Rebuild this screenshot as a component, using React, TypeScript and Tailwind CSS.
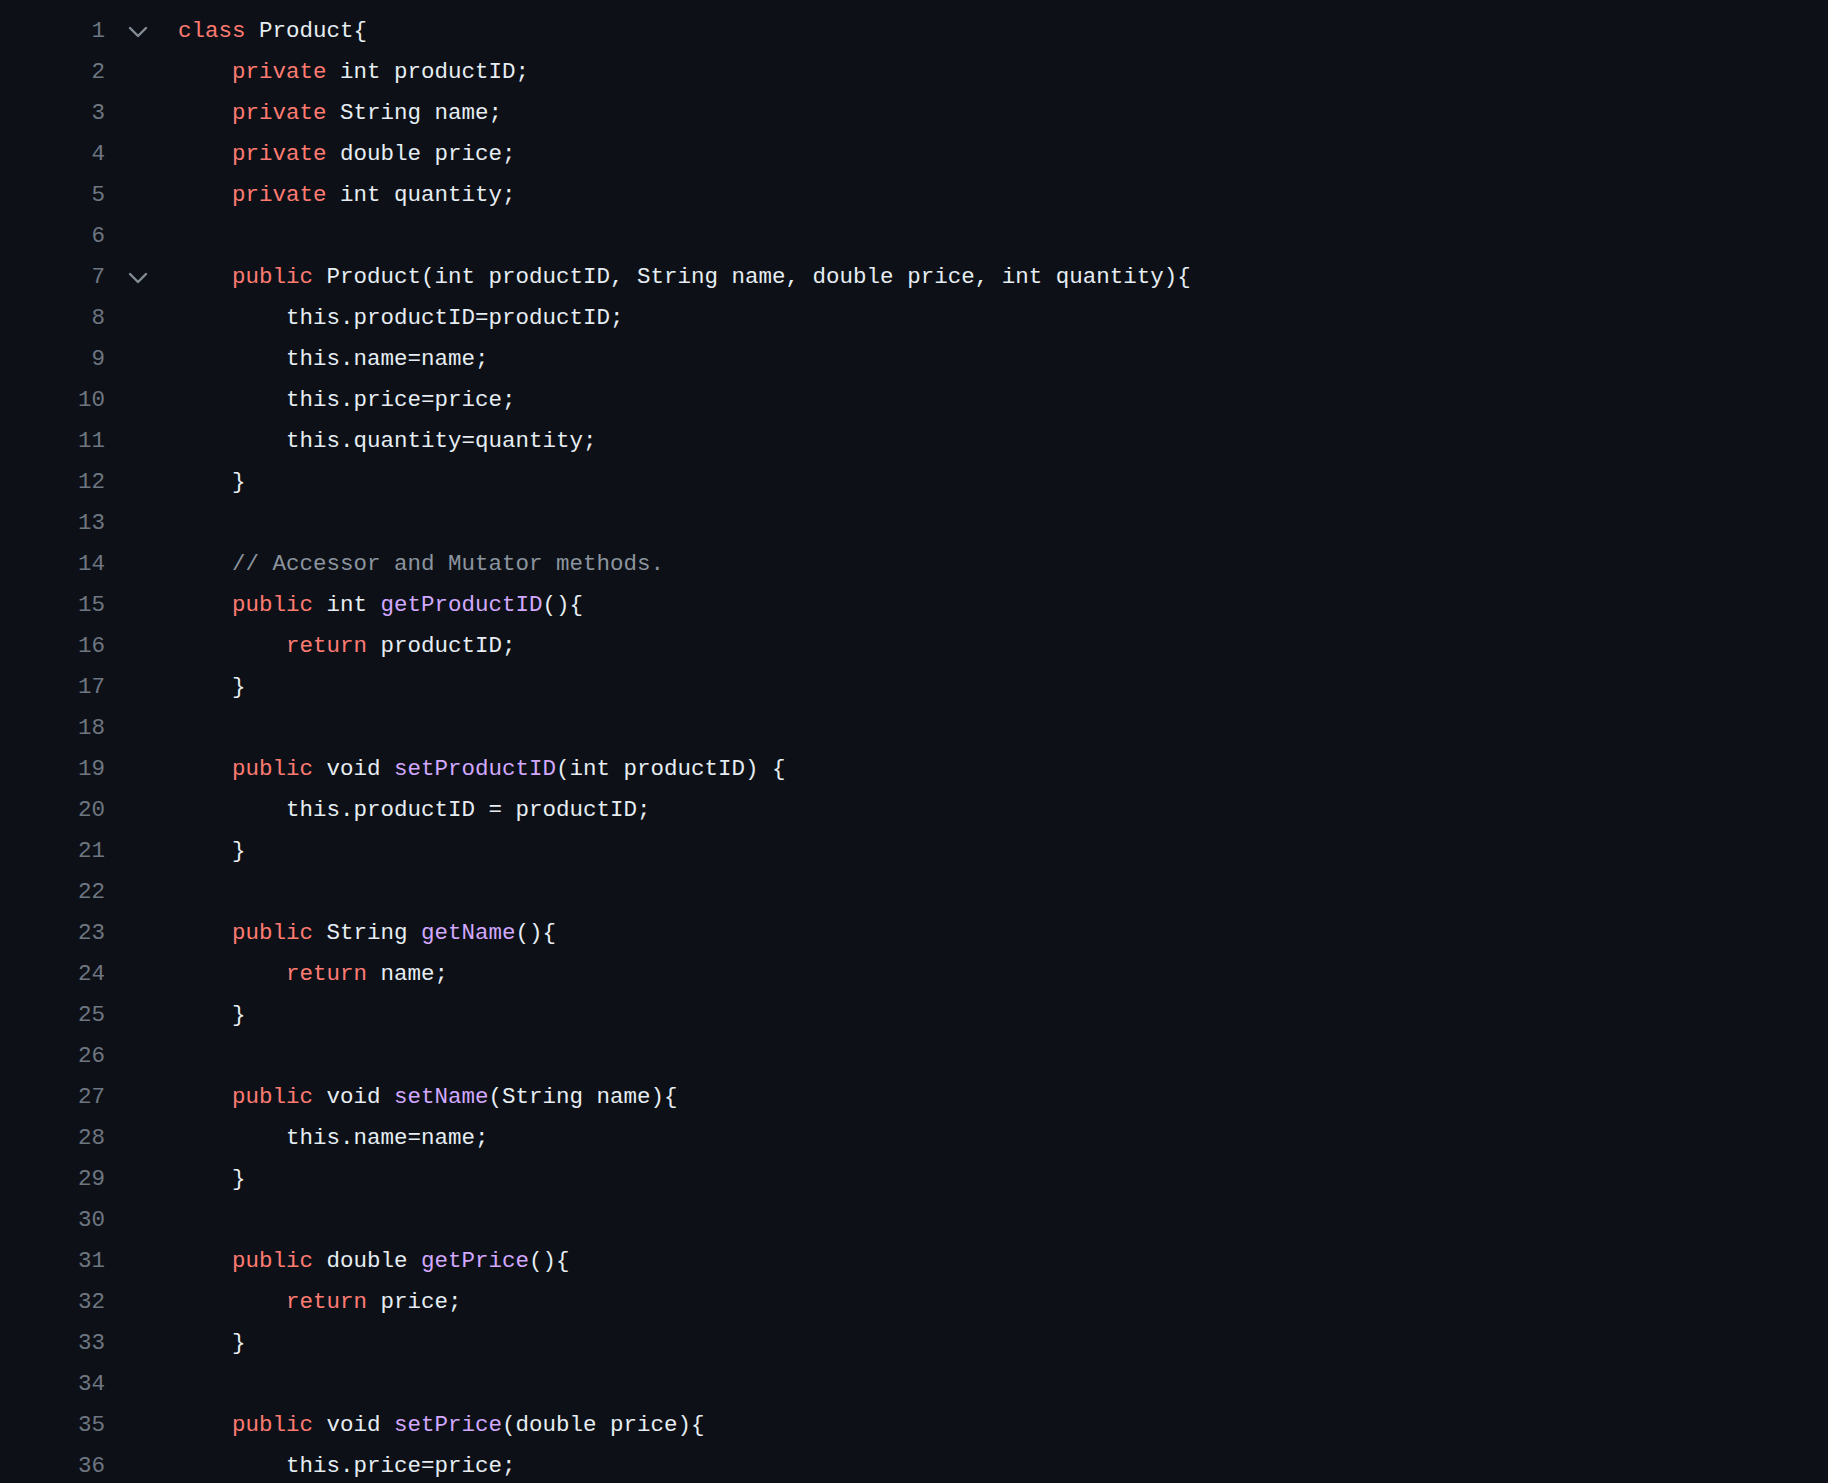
import React from "react";

type Tok = [string, "k" | "f" | "c" | "t"];

const k = (s: string): Tok => [s, "k"];
const f = (s: string): Tok => [s, "f"];
const c = (s: string): Tok => [s, "c"];
const t = (s: string): Tok => [s, "t"];

const lines: Tok[][] = [
    [k("class"), t(" Product{")],
    [t("    "), k("private"), t(" int productID;")],
    [t("    "), k("private"), t(" String name;")],
    [t("    "), k("private"), t(" double price;")],
    [t("    "), k("private"), t(" int quantity;")],
    [],
    [t("    "), k("public"), t(" Product(int productID, String name, double price, int quantity){")],
    [t("        this.productID=productID;")],
    [t("        this.name=name;")],
    [t("        this.price=price;")],
    [t("        this.quantity=quantity;")],
    [t("    }")],
    [],
    [t("    "), c("// Accessor and Mutator methods.")],
    [t("    "), k("public"), t(" int "), f("getProductID"), t("(){")],
    [t("        "), k("return"), t(" productID;")],
    [t("    }")],
    [],
    [t("    "), k("public"), t(" void "), f("setProductID"), t("(int productID) {")],
    [t("        this.productID = productID;")],
    [t("    }")],
    [],
    [t("    "), k("public"), t(" String "), f("getName"), t("(){")],
    [t("        "), k("return"), t(" name;")],
    [t("    }")],
    [],
    [t("    "), k("public"), t(" void "), f("setName"), t("(String name){")],
    [t("        this.name=name;")],
    [t("    }")],
    [],
    [t("    "), k("public"), t(" double "), f("getPrice"), t("(){")],
    [t("        "), k("return"), t(" price;")],
    [t("    }")],
    [],
    [t("    "), k("public"), t(" void "), f("setPrice"), t("(double price){")],
    [t("        this.price=price;")],
];

// lines that get a fold chevron
const folds = [1, 7];

const tokClass = {
    k: "text-[#ff7b72]",
    f: "text-[#d2a8ff]",
    c: "text-[#8b949e]",
    t: "text-[#e6edf3]",
};

const Chevron = () => (
    <svg width="20" height="12" viewBox="0 0 20 12" fill="none">
        <polyline points="2,2 10,10 18,2" stroke="#848d97" strokeWidth="2.4" strokeLinecap="round" strokeLinejoin="round" />
    </svg>
);

export default function App() {
    return (
        <div className="min-h-screen w-full bg-[#0d1117] pt-[11px] font-['Liberation_Mono',monospace] text-[22.5px] leading-[41px]">
            {lines.map((toks, i) => (
                <div key={i} className="flex h-[41px] items-center">
                    <div className="w-[105px] shrink-0 text-right text-[#6e7681]">{i + 1}</div>
                    <div className="flex w-[73px] shrink-0 items-center pl-[23px]">
                        {folds.includes(i + 1) && <Chevron />}
                    </div>
                    <pre className="m-0 font-['Liberation_Mono',monospace] whitespace-pre">
                        {toks.map(([s, kind], j) => (
                            <span key={j} className={tokClass[kind]}>
                                {s}
                            </span>
                        ))}
                    </pre>
                </div>
            ))}
        </div>
    );
}
